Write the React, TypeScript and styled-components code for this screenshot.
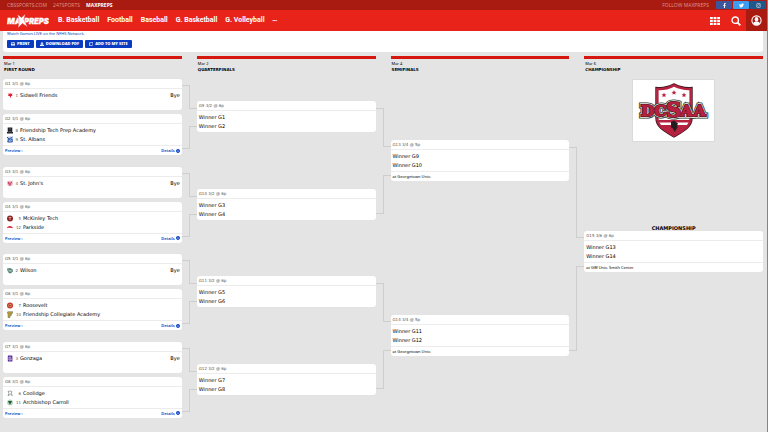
import React from "react";
import styled, { createGlobalStyle } from "styled-components";
import { FaFacebookF, FaTwitter, FaInstagram, FaPrint, FaDownload, FaRegClone, FaInfoCircle } from "react-icons/fa";

const GlobalStyle = createGlobalStyle`
  * { box-sizing: border-box; }
  body {
    margin: 0;
    background: #e4e4e4;
    color: #000;
    font-family: "Noto Sans", sans-serif;
    font-size: 5px;
    line-height: 9px;
  }
  a { color: inherit; text-decoration: none; }
  button { font-family: inherit; border: 0; margin: 0; padding: 0; cursor: pointer; }
  svg { display: block; flex: none; }
`;

const Page = styled.div`
  min-height: 100vh;
  border-right: 1px solid #6d8ba3;
`;

const TopBar = styled.div`
  display: flex;
  align-items: center;
  height: 10px;
  padding: 0 1px 0 7px;
  background: #a91a10;
`;

const SiteLinks = styled.nav`
  display: flex;
  gap: 6px;
  flex: 1;
`;

const SiteLink = styled.a<{ $active?: boolean }>`
  font-size: 5px;
  font-weight: ${(p) => (p.$active ? 700 : 400)};
  line-height: 10px;
  color: ${(p) => (p.$active ? "#fff" : "#dc8f89")};
`;

const Follow = styled.span`
  font-size: 5px;
  line-height: 10px;
  color: #dc8f89;
  margin-right: 6px;
`;

const Social = styled.a<{ $color: string }>`
  display: flex;
  align-items: center;
  justify-content: center;
  width: 16px;
  height: 8px;
  margin-left: 1px;
  border-radius: 1px;
  color: #fff;
  background: ${(p) => p.$color};
`;

const MainBar = styled.header`
  display: flex;
  align-items: center;
  height: 21px;
  padding-left: 7px;
  background: #e8231a;
`;

const MainNav = styled.nav`
  display: flex;
  align-items: center;
  gap: 8px;
  flex: 1;
  margin-left: 9px;
`;

const NavLink = styled.a`
  color: #fff;
  font-family: Roboto, sans-serif;
  font-size: 7px;
  font-weight: 700;
  line-height: 21px;
  white-space: nowrap;
`;

const MoreLink = styled(NavLink)`
  font-family: "Noto Sans", sans-serif;
  font-size: 4px;
`;

const IconButton = styled.button<{ $dark?: boolean }>`
  display: flex;
  align-items: center;
  justify-content: center;
  width: 21px;
  height: 21px;
  color: #fff;
  background: ${(p) => (p.$dark ? "#a91a10" : "transparent")};
`;

const Intro = styled.section`
  height: 21px;
  margin: 0 4px 0 3px;
  padding: 0 4px;
  background: #fff;
  border-radius: 0 0 3px 3px;
`;

const WatchLink = styled.a`
  display: block;
  font-size: 4px;
  line-height: 6px;
  color: #0a3fb5;
`;

const Actions = styled.div`
  display: flex;
  gap: 2px;
  margin-top: 3px;
`;

const Action = styled.button`
  display: flex;
  align-items: center;
  gap: 2px;
  height: 8px;
  padding: 0 4px;
  border-radius: 1px;
  background: #0a3cc2;
  color: #fff;
  font-size: 4px;
  font-weight: 900;
  line-height: 8px;
  white-space: nowrap;
`;

const Bracket = styled.main`
  display: grid;
  grid-template-columns: 1fr 15px 1fr 15px 1fr 15px 1fr;
  padding: 4px 4px 0 3px;
`;

const RoundHead = styled.div`
  height: 23px;
  padding: 2px 1px 0;
  border-top: 3px solid #d5170f;
`;

const RoundDate = styled.div`
  font-size: 4px;
  line-height: 6px;
`;

const RoundTitle = styled.h2`
  margin: 0;
  font: 700 4px/6px "DejaVu Sans", sans-serif;
`;

const Column = styled.div`
  display: flex;
  flex-direction: column;
  min-height: 350px;
  min-width: 0;
`;

const Slot = styled.section<{ $top: number }>`
  flex: 1;
  display: flex;
  flex-direction: column;
  gap: 4px;
  padding-top: ${(p) => p.$top}px;
`;

const Card = styled.article`
  display: flex;
  flex-direction: column;
  min-height: 31px;
  background: #fff;
  border-radius: 3px;
`;

const CardHead = styled.div`
  height: 10px;
  padding: 0 2px;
  border-bottom: 1px solid #ececec;
  color: #555;
  font: 4px/10px "DejaVu Sans", sans-serif;
`;

const CardBody = styled.div`
  padding: 2px 2px 1px;
`;

const Team = styled.div<{ $logo?: boolean }>`
  display: flex;
  align-items: center;
  height: 9px;
  padding-left: ${(p) => (p.$logo ? 2 : 0)}px;
  font-family: "DejaVu Sans", sans-serif;
  font-size: 5px;
  white-space: nowrap;
`;

const Seed = styled.span<{ $wide?: boolean }>`
  width: ${(p) => (p.$wide ? 8 : 5)}px;
  margin-right: 2px;
  text-align: right;
  color: #555;
  font-size: 4px;
`;

const Bye = styled.span`
  margin-left: auto;
`;

const CardFoot = styled.div<{ $links?: boolean }>`
  display: flex;
  align-items: center;
  justify-content: space-between;
  height: 10px;
  padding: 0 2px;
  border-top: 1px solid #ececec;
  font-size: 4px;
  font-weight: ${(p) => (p.$links ? 600 : 400)};
  color: ${(p) => (p.$links ? "#0a3cc2" : "#000")};
`;

const FootLink = styled.a`
  display: flex;
  align-items: center;
  gap: 1px;
`;

const Joint = styled.div<{ $top: number; $gap: number; $upper: number; $lower: number }>`
  flex: 1;
  display: grid;
  grid-template-columns: 8px 7px;
  grid-template-rows: ${(p) => `${p.$upper}px ${p.$lower}px`};
  align-content: start;
  row-gap: ${(p) => p.$gap}px;
  padding-top: ${(p) => p.$top}px;
`;

const Line = styled.span<{ $sides: string }>`
  border: 0 solid #cecece;
  border-width: ${(p) => p.$sides};
`;

const Emblem = styled.figure`
  display: flex;
  align-items: center;
  justify-content: center;
  align-self: center;
  width: 83px;
  height: 63px;
  margin: 0 0 83px;
  background: #fff;
  border: 1px solid #dadada;
`;

const FinalTitle = styled.h3`
  margin: 0;
  text-align: center;
  font: 700 5px/6px "DejaVu Sans", sans-serif;
`;

const Logo = () => (
  <svg width="42" height="14" viewBox="0 0 42 14" aria-label="MaxPreps">
    <g fill="#fff" stroke="#fff" strokeWidth=".3" fontFamily="Inter, sans-serif" fontWeight="900" fontStyle="italic" fontSize="8">
      <text x="0" y="9.5">MA</text>
      <text x="17" y="9.5" fontSize="7.6">PREPS</text>
    </g>
    <path d="M10.5.5l4 3L18.5 0l-1.700 5.300L20.500 13l-5-3.500L11 13.800l1.200-7z" fill="#fff" stroke="#e8231a" strokeWidth=".4" />
  </svg>
);

const GridIcon = () => (
  <svg width="10" height="8" viewBox="0 0 10 8" fill="#fff">
    {[0, 3, 6].map((y) => [0, 3.6, 7.2].map((x) => <rect key={`${x}-${y}`} x={x} y={y} width="2.8" height="2.2" />))}
  </svg>
);

const SearchIcon = () => (
  <svg width="10" height="10" viewBox="0 0 10 10" fill="none" stroke="#fff">
    <circle cx="4.2" cy="4.2" r="3.2" strokeWidth="1.4" />
    <path d="M6.6 6.6L9.3 9.3" strokeWidth="1.8" />
  </svg>
);

const UserIcon = () => (
  <svg width="11" height="11" viewBox="0 0 11 11">
    <circle cx="5.5" cy="5.5" r="4.6" fill="none" stroke="#fff" strokeWidth="1.1" />
    <ellipse cx="5.5" cy="4.2" rx="1.8" ry="2.2" fill="#fff" />
    <path d="M2 8.4c.5-1.5 2-1.6 2.6-2h1.8c.6.4 2.1.5 2.6 2a4.6 4.6 0 0 1-7 0z" fill="#fff" />
  </svg>
);

const TeamLogo = ({ name }: { name: string }) => {
  const art: Record<string, React.ReactNode> = {
    "Sidwell Friends": <path d="M.5.8l2 .6L3 .2l.8 1.200 1.700-.5-.6 1.500.7.9-1.500.3-.5 2.200-.7-2-2-.5.9-1z" fill="#dc1c2c" />,
    "Friendship Tech Prep Academy": <><path d="M.7 0h4.600v4.500H6V6H0V4.500h.7z" fill="#20222a" /><path d="M1.500 4.200h3M2 1.500h2" stroke="#8b8d98" strokeWidth=".6" /></>,
    "St. Albans": <><rect width="6" height="6" rx="1" fill="#b9cdec" /><path d="M0 .5l2 2 2-1 1.500-1M.8 5.500l1-3 1.400 1.200L5 2.400l.3 3z" fill="none" stroke="#234d9c" strokeWidth=".9" /></>,
    "St. John's": <><circle cx="3" cy="3" r="2.800" fill="#efb8c2" /><path d="M.4 1l2.200 1.200L5.600.8 4.200 3 3 5.400 1.500 3.500z" fill="#c2284a" /><path d="M3.500 1.500L2.600 4" stroke="#fff" strokeWidth=".5" /></>,
    "McKinley Tech": <><circle cx="3" cy="3" r="3" fill="#8f2525" /><path d="M1.700 2h2.600M3 1.700v2.800" stroke="#e0b4a6" strokeWidth=".8" /></>,
    Parkside: <path d="M0 3.800C.6 1.200 4.600.5 6 3.800 4.500 3.200 2 3.100 0 3.800z" fill="#dc1c2c" />,
    Wilson: <><path d="M.3.800h3.500L5.800 2v2L4 5.800H2L.3 3z" fill="#4f8170" /><path d="M1.500 2l.8 2 .8-1.500.8 1.500.7-2" fill="none" stroke="#d8e4df" strokeWidth=".6" /></>,
    Roosevelt: <><circle cx="3" cy="3" r="3" fill="#c7372d" /><circle cx="3" cy="3" r="1.700" fill="#e29350" /><path d="M2 2l2 1-1.500 1z" fill="#412a66" /></>,
    "Friendship Collegiate Academy": <path d="M.8.200h5L5.300 2H3v.8h1.600L4 4.300H3V6H1V1.800H.3z" fill="#c4a12d" stroke="#3c4a3f" strokeWidth=".4" />,
    Gonzaga: <><rect x=".8" width="4.600" height="6" rx=".5" fill="#572a9b" /><path d="M4.300 1.700H2v2.800h2.200V3.200H3.200" fill="none" stroke="#fff" strokeWidth=".6" /></>,
    Coolidge: <path d="M1 1l2-.5L4.800 1l-.5 1.700 1 2.500-1.800-1.500L1 5.300l1-2.500z" fill="none" stroke="#75817b" strokeWidth=".7" />,
    "Archbishop Carroll": <><circle cx="3" cy="3" r="2.900" fill="#b7d3bd" /><path d="M1 1.500h4L4.300 3 3 5.200 1.700 3z" fill="#1d5b37" /></>,
  };
  return <svg width="6" height="7" viewBox="0 0 6 6">{art[name]}</svg>;
};

const Star = ({ x, y }: { x: number; y: number }) => (
  <path transform={`translate(${x} ${y})`} d="M0-2.400L.7-.7l1.800.1L1.100.5l.5 1.800L0 1.300l-1.600 1L-1.100.5l-1.400-1.100L-.7-.7z" fill="#b5213f" />
);

const DcsaaLogo = () => (
  <svg width="72" height="56" viewBox="-1 -1 72 56" aria-label="DCSAA">
    <path d="M17 3.500c6 1 12-.5 18-3.500 6 3 12 4.500 18 3.500V34c0 9-8 13-18 19C25 47 17 43 17 34z" fill="#fff" stroke="#3a1820" strokeWidth="1.400" />
    <path d="M18.400 5c6 .6 11-.8 16.600-3.600C41 4.200 46 5.600 51.600 5v29c0 8-7 12-16.600 17.600C25 46 18.400 42 18.400 34z" fill="none" stroke="#b5213f" strokeWidth="2.400" />
    <path d="M19 36h32v2.500H19zM20 41h30l-4 4.500-11 6-11-6z" fill="#b5213f" />
    <Star x={25} y={11} /><Star x={35} y={8.5} /><Star x={45} y={11} />
    <path d="M32 38l3-1.500 4 3-1 2 .5 2-3 4.500-1.500-3.500-2-1z" fill="#241c1e" />
    <g fontFamily="'DejaVu Serif', serif" fontWeight="700" textAnchor="middle">
      {[
        { color: "#26332f", width: 5 },
        { color: "#efece2", width: 3.4 },
        { color: "#33161c", width: 2.2 },
        { color: "#b5213f", width: 1 },
      ].map(({ color, width }) => (
        <g key={color} fill="#b5213f" stroke={color} strokeWidth={width}>
          <text x="8.5" y="31.5" fontSize="15.500">D</text>
          <text x="21.5" y="31.5" fontSize="15.500">C</text>
          <text x="34.5" y="33" fontSize="21">S</text>
          <text x="47.5" y="31.5" fontSize="15.500">A</text>
          <text x="60.5" y="31.5" fontSize="15.500">A</text>
        </g>
      ))}
    </g>
  </svg>
);

type Entry = { seed: number; name: string };
type FirstGame = { label: string; teams: Entry[] };

const firstRound: FirstGame[][] = [
  [
    { label: "G1 3/1 @ 6p", teams: [{ seed: 1, name: "Sidwell Friends" }] },
    { label: "G2 3/1 @ 6p", teams: [{ seed: 8, name: "Friendship Tech Prep Academy" }, { seed: 9, name: "St. Albans" }] },
  ],
  [
    { label: "G3 3/1 @ 6p", teams: [{ seed: 4, name: "St. John's" }] },
    { label: "G4 3/1 @ 6p", teams: [{ seed: 5, name: "McKinley Tech" }, { seed: 12, name: "Parkside" }] },
  ],
  [
    { label: "G5 3/1 @ 6p", teams: [{ seed: 2, name: "Wilson" }] },
    { label: "G6 3/1 @ 6p", teams: [{ seed: 7, name: "Roosevelt" }, { seed: 10, name: "Friendship Collegiate Academy" }] },
  ],
  [
    { label: "G7 3/1 @ 6p", teams: [{ seed: 3, name: "Gonzaga" }] },
    { label: "G8 3/1 @ 6p", teams: [{ seed: 6, name: "Coolidge" }, { seed: 11, name: "Archbishop Carroll" }] },
  ],
];

const FirstCard = ({ game }: { game: FirstGame }) => {
  const played = game.teams.length > 1;
  const wide = game.teams.some((t) => t.seed > 9);
  return (
    <Card>
      <CardHead>{game.label}</CardHead>
      <CardBody>
        {game.teams.map((t) => (
          <Team key={t.name} $logo>
            <TeamLogo name={t.name} />
            <Seed $wide={wide}>{t.seed}</Seed>
            <a href="#team">{t.name}</a>
            {!played && <Bye>Bye</Bye>}
          </Team>
        ))}
      </CardBody>
      {played && (
        <CardFoot $links>
          <FootLink href="#preview">Preview ›</FootLink>
          <FootLink href="#details">Details <FaInfoCircle size={4} /></FootLink>
        </CardFoot>
      )}
    </Card>
  );
};

const WinnerCard = ({ label, from, venue }: { label: string; from: number; venue?: string }) => (
  <Card>
    <CardHead>{label}</CardHead>
    <CardBody>
      <Team>Winner G{from}</Team>
      <Team>Winner G{from + 1}</Team>
    </CardBody>
    {venue && <CardFoot>{venue}</CardFoot>}
  </Card>
);

const Joints = ({ count, top, upper, gap, lower }: { count: number; top: number; upper: number; gap: number; lower: number }) => (
  <Column aria-hidden>
    {Array.from({ length: count }, (_, i) => (
      <Joint key={i} $top={top} $upper={upper} $gap={gap} $lower={lower}>
        <Line $sides="1px 1px 0 0" />
        <Line $sides="0 0 1px 0" />
        <Line $sides="0 1px 1px 0" />
        <Line $sides="1px 0 0 0" />
      </Joint>
    ))}
  </Column>
);

const Head = ({ date, title }: { date: string; title: string }) => (
  <RoundHead>
    <RoundDate>{date}</RoundDate>
    <RoundTitle>{title}</RoundTitle>
  </RoundHead>
);

export default function App() {
  return (
    <Page>
      <GlobalStyle />
      <TopBar>
        <SiteLinks>
          <SiteLink href="#cbs">CBSSPORTS.COM</SiteLink>
          <SiteLink href="#247">247SPORTS</SiteLink>
          <SiteLink href="#maxpreps" $active>MAXPREPS</SiteLink>
        </SiteLinks>
        <Follow>FOLLOW MAXPREPS</Follow>
        <Social href="#facebook" aria-label="Facebook" $color="#3c569b"><FaFacebookF size={5} /></Social>
        <Social href="#twitter" aria-label="Twitter" $color="#3f9df0"><FaTwitter size={5} /></Social>
        <Social href="#instagram" aria-label="Instagram" $color="#21588c"><FaInstagram size={5} /></Social>
      </TopBar>
      <MainBar>
        <a href="#home"><Logo /></a>
        <MainNav>
          {["B. Basketball", "Football", "Baseball", "G. Basketball", "G. Volleyball"].map((n) => (
            <NavLink key={n} href="#sport">{n}</NavLink>
          ))}
          <MoreLink href="#more">•••</MoreLink>
        </MainNav>
        <IconButton aria-label="Apps"><GridIcon /></IconButton>
        <IconButton aria-label="Search"><SearchIcon /></IconButton>
        <IconButton aria-label="Account" $dark><UserIcon /></IconButton>
      </MainBar>
      <Intro>
        <WatchLink href="#watch">Watch Games LIVE on the NFHS Network.</WatchLink>
        <Actions>
          <Action><FaPrint size={4} />PRINT</Action>
          <Action><FaDownload size={4} />DOWNLOAD PDF</Action>
          <Action><FaRegClone size={4} />ADD TO MY SITE</Action>
        </Actions>
      </Intro>
      <Bracket>
        <Head date="Mar 1" title="FIRST ROUND" /><span />
        <Head date="Mar 2" title="QUARTERFINALS" /><span />
        <Head date="Mar 4" title="SEMIFINALS" /><span />
        <Head date="Mar 6" title="CHAMPIONSHIP" />
        <Column>
          {firstRound.map((pair, i) => (
            <Slot key={i} $top={0}>
              {pair.map((g) => <FirstCard key={g.label} game={g} />)}
            </Slot>
          ))}
        </Column>
        <Joints count={4} top={6} upper={24} gap={17} lower={23} />
        <Column>
          {["G9", "G10", "G11", "G12"].map((g, i) => (
            <Slot key={g} $top={22}><WinnerCard label={`${g} 3/2 @ 6p`} from={i * 2 + 1} /></Slot>
          ))}
        </Column>
        <Joints count={2} top={29} upper={39} gap={28} lower={39} />
        <Column>
          {["G13", "G14"].map((g, i) => (
            <Slot key={g} $top={61}>
              <WinnerCard label={`${g} 3/4 @ 5p`} from={9 + i * 2} venue="at Georgetown Univ." />
            </Slot>
          ))}
        </Column>
        <Joints count={1} top={68} upper={91} gap={28} lower={85} />
        <Column>
          <Emblem><DcsaaLogo /></Emblem>
          <FinalTitle>CHAMPIONSHIP</FinalTitle>
          <WinnerCard label="G15 3/6 @ 6p" from={13} venue="at GW Univ. Smith Center" />
        </Column>
      </Bracket>
    </Page>
  );
}
